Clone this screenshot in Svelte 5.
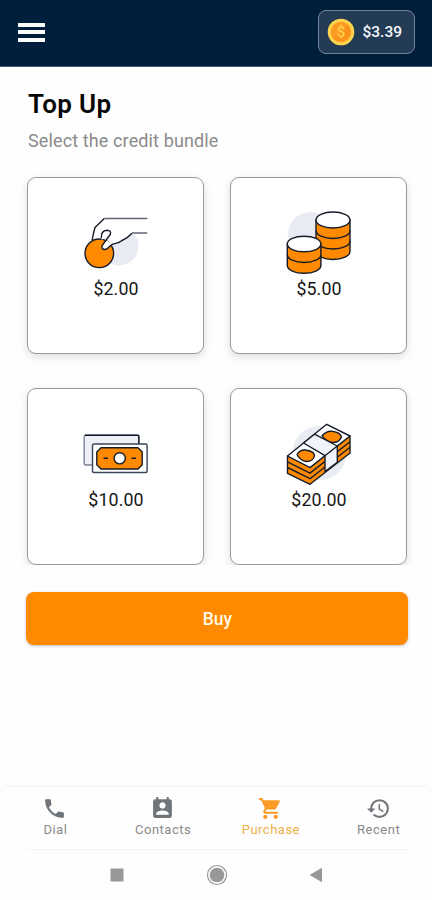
<script>
  const bundles = ['$2.00', '$5.00', '$10.00', '$20.00'];
  let selected = $state(null);
  const tabs = [
    { name: 'Dial', d: 'M6.62 10.79c1.44 2.83 3.76 5.14 6.59 6.59l2.2-2.2c.27-.27.67-.36 1.02-.24 1.12.37 2.33.57 3.57.57.55 0 1 .45 1 1V20c0 .55-.45 1-1 1-9.39 0-17-7.61-17-17 0-.55.45-1 1-1h3.5c.55 0 1 .45 1 1 0 1.25.2 2.45.57 3.57.11.35.03.74-.25 1.02l-2.2 2.2z' },
    { name: 'Contacts', d: 'M19 3h-1V1h-2v2H8V1H6v2H5c-1.11 0-2 .9-2 2v14c0 1.1.89 2 2 2h14c1.1 0 2-.9 2-2V5c0-1.1-.9-2-2-2zm-7 3c1.66 0 3 1.34 3 3s-1.34 3-3 3-3-1.34-3-3 1.34-3 3-3zm6 12H6v-1c0-2 4-3.1 6-3.1s6 1.1 6 3.1v1z' },
    { name: 'Purchase', active: true, d: 'M7 18c-1.1 0-1.99.9-1.99 2S5.9 22 7 22s2-.9 2-2-.9-2-2-2zM1 2v2h2l3.6 7.59-1.35 2.45c-.16.28-.25.61-.25.96 0 1.1.9 2 2 2h12v-2H7.42c-.14 0-.25-.11-.25-.25l.03-.12.9-1.63h7.45c.75 0 1.41-.41 1.75-1.03l3.58-6.49A1 1 0 0 0 20 4H5.21l-.94-2H1zm16 16c-1.1 0-1.99.9-1.99 2s.89 2 1.99 2 2-.9 2-2-.9-2-2-2z' },
    { name: 'Recent', d: 'M13 3a9 9 0 0 0-9 9H1l3.89 3.89.07.14L9 12H6c0-3.87 3.13-7 7-7s7 3.13 7 7-3.13 7-7 7c-1.93 0-3.68-.79-4.94-2.06l-1.42 1.42A8.954 8.954 0 0 0 13 21a9 9 0 0 0 0-18zm-1 5v5l4.28 2.54.72-1.21-3.5-2.08V8H12z' }
  ];
</script>

<div class="screen">
  <header>
    <button class="menu" aria-label="Menu"><span></span><span></span><span></span></button>
    <div class="balance">
      <svg width="28" height="28" viewBox="0 0 28 28">
        <circle cx="14" cy="14" r="13.3" fill="#ffd44d" />
        <circle cx="14" cy="14" r="10.3" fill="#fd9b22" />
        <path d="M21 6.5a10.3 10.3 0 0 1-14.5 14.5z" fill="#fb8c14" opacity=".6" />
        <text x="14" y="19.3" text-anchor="middle">$</text>
      </svg>
      <span>$3.39</span>
    </div>
  </header>

  <main>
    <h1>Top Up</h1>
    <p>Select the credit bundle</p>
    <div class="grid">
      {#each bundles as price, i}
        <button class="card" onclick={() => (selected = i)} aria-pressed={selected === i}>
          <svg width="71" height="72" viewBox="0 0 71 72" fill="none" stroke="#161c28" stroke-width="1.4" stroke-linejoin="round">
            {#if i === 0}
              <circle cx="39" cy="41" r="19.5" fill="#e8ebf2" stroke="none" />
              <path d="M67.3 13.3H24.3L15 23.3L11.7 35L22 42L25 44.3L32 39Q38 38.5 42 35.5Q49 32 52 28.8L67.3 28Z" fill="#fff" stroke="none" />
              <path d="M53 28.5H67V33H58Z" fill="#fff" stroke="none" />
              <circle cx="19.3" cy="48.3" r="14.3" fill="#ff8a00" />
              <path d="M21.5 34.5L22.3 28.5Q23.5 25.2 27 25Q31.5 25.2 30.6 29L24 38Q20.7 42.4 23 44Q26 45.3 28.5 42.7L32 39L24 34Z" fill="#fff" stroke="none" />
              <path d="M24.3 13.5L15 22.5Q13.4 28 12.2 35M21.3 33Q21 25.5 26.8 25.2Q32 25.5 30.2 29.5L24 38Q20.5 42.3 22.8 44Q26 45.4 28.5 42.5Q31.5 38.8 35 38.6Q39.5 37.8 42 35.5Q48.5 32.5 52 28.3" />
              <path d="M24.3 13.5H67.3M52 28H67.3" stroke="#5f6673" />
            {:else if i === 1}
              <circle cx="27.5" cy="29.5" r="22.5" fill="#e8ebf2" stroke="none" />
              <path d="M33 15v31.5a17 8 0 0 0 34 0V15z" fill="#ff8a00" />
              <path d="M33 25.5a17 8 0 0 0 34 0M33 36a17 8 0 0 0 34 0" />
              <ellipse cx="50" cy="15" rx="17" ry="8" fill="#fff" />
              <path d="M4.3 39v21.5a16.8 7.8 0 0 0 33.6 0V39z" fill="#ff8a00" />
              <path d="M4.3 49.7a16.8 7.8 0 0 0 33.6 0" />
              <ellipse cx="21.1" cy="39" rx="16.8" ry="7.8" fill="#fff" />
            {:else if i === 2}
              <rect x="4.2" y="19.2" width="54.6" height="29.8" rx="1.5" fill="#edf0f7" stroke="#788294" />
              <path d="M5 19.2h53q.8 0 .8.8v8" />
              <rect x="12.5" y="28" width="54.6" height="28.5" rx="1.5" fill="#fff" stroke="#39445a" />
              <path d="M21 31.8h37l4.2 4.2v12.8L58 53H21l-4.2-4.2V36z" fill="#ff8a00" />
              <circle cx="39.7" cy="42.3" r="5.6" fill="#fff" />
              <path d="M23.5 42.3h4.5M51.5 42.3h4.5" />
            {:else}
              <circle cx="36.5" cy="37" r="27" fill="#e8ebf2" stroke="none" />
              <path d="M4.5 40L27 51.5L67 20V37L27 68.3L4.5 57.3z" fill="#ff8a00" />
              <path d="M4.5 45.8L27 57.1L67 25.7M4.5 51.5L27 62.7L67 31.3" />
              <path d="M4.5 40L43.7 8.3L67 20L27 51.5z" fill="#fff" />
              <path d="M14 38.5Q17 33.5 22 34Q31 35 31.5 39.5Q30.5 45.5 23.5 45.5Q17.5 45 14 38.5zM39 19.8Q43 15.2 48.5 15.3Q56.5 16 58.5 20.5Q57 26 50.5 26.5Q43.5 25.8 39 19.8z" fill="#ff8a00" />
              <path d="M20.5 27L31.5 18.2L54.3 30V46.3L42 55.5V39.7z" fill="#f1f3fa" />
              <path d="M42 39.7L54.3 30" />
            {/if}
          </svg>
          <span class="price">{price}</span>
        </button>
      {/each}
    </div>
    <button class="buy">Buy</button>
  </main>

  <nav>
    {#each tabs as tab}
      <a href="#{tab.name}" class:active={tab.active}>
        <svg width="25" height="25" viewBox="0 0 24 24"><path d={tab.d} /></svg>
        <span>{tab.name}</span>
      </a>
    {/each}
  </nav>
  <div class="system">
    <svg width="14" height="14" viewBox="0 0 14 14"><rect width="13" height="13" x=".5" y=".5" /></svg>
    <svg width="22" height="22" viewBox="0 0 22 22"><circle cx="11" cy="11" r="9.5" fill="none" stroke="#989898" stroke-width="1.2" /><circle cx="11" cy="11" r="7.3" /></svg>
    <svg width="14" height="16" viewBox="0 0 14 16"><path d="M.5 8L13 .8v14.4z" /></svg>
  </div>
</div>

<style>
  :global(body) { margin: 0; background: #fefefe; }
  .screen {
    width: 432px;
    height: 900px;
    overflow: hidden;
    display: flex;
    flex-direction: column;
    font-family: Roboto, "Liberation Sans", sans-serif;
    background: #fefefe;
  }
  button { font-family: inherit; cursor: pointer; }
  header {
    height: 67px;
    flex: none;
    box-sizing: border-box;
    padding: 0 17px 2px 18px;
    display: flex;
    align-items: center;
    justify-content: space-between;
    background: #001f3d;
    border-bottom: 1px solid #4a5670;
  }
  .menu {
    display: flex;
    flex-direction: column;
    gap: 3.5px;
    padding: 0;
    border: 0;
    background: none;
  }
  .menu span { width: 26.5px; height: 4px; background: #fbfdfb; }
  .balance {
    width: 97px;
    height: 44px;
    box-sizing: border-box;
    padding-left: 7.5px;
    display: flex;
    align-items: center;
    gap: 8px;
    border: 1.5px solid #74849e;
    border-radius: 8px;
    background: #243b56;
    color: #f4f8fb;
    font-size: 15.5px;
    font-weight: 500;
  }
  .balance text { font-size: 15px; font-weight: 500; fill: #ffd04c; }
  main { display: flex; flex-direction: column; padding: 0 24.5px 0 25.5px; }
  h1 {
    margin: 20px 2.5px 0;
    font-size: 26px;
    line-height: 34px;
    font-weight: 600;
    letter-spacing: 0.3px;
    color: #080808;
  }
  p { margin: 9px 2.5px 0; font-size: 18px; line-height: 22px; letter-spacing: 0.12px; color: #8b8b8b; }
  .grid {
    display: grid;
    grid-template-columns: 177px 177px;
    grid-auto-rows: 176.5px;
    gap: 34.5px 26px;
    height: 388px;
    margin: 15px -10px 0;
    padding: 10px 12px 0 11.5px;
    box-sizing: border-box;
    height: 398px;
    overflow: hidden;
  }
  .card {
    display: flex;
    flex-direction: column;
    align-items: center;
    box-sizing: border-box;
    padding: 27px 0 0;
    border: 1.5px solid #9b9b9b;
    border-radius: 9px;
    background: #fff;
    box-shadow: 0 3px 8px rgba(0, 0, 0, 0.13);
  }
  .card svg { flex: none; }
  .price { margin: 1px 0 0 1px; font-size: 17.8px; line-height: 22px; color: #161616; letter-spacing: 0.1px; }
  .buy {
    height: 53px;
    margin-top: 26.5px;
    padding: 2px 0 0 2px;
    border: 0;
    border-radius: 8px;
    background: #ff8a00;
    color: #fff8e6;
    font-size: 17.5px;
    font-weight: 500;
    box-shadow: 0 1px 3px rgba(0, 0, 0, 0.25);
  }
  nav {
    display: flex;
    height: 63px;
    flex: none;
    margin-top: auto;
    box-sizing: border-box;
    padding-left: 1px;
    border-top: 1px solid #f7f7f7;
    border-radius: 10px 10px 0 0;
    box-shadow: 0 -1px 3px rgba(0, 0, 0, 0.04);
  }
  nav a {
    flex: 1 1 0;
    display: flex;
    flex-direction: column;
    align-items: center;
    padding-top: 9px;
    color: #8a8a8a;
    text-decoration: none;
  }
  nav path { fill: #70757a; }
  nav span { margin: 1px 0 0 1px; font-size: 13px; line-height: 16px; letter-spacing: 0.5px; }
  nav .active { color: #edb04a; }
  nav .active path { fill: #f99b24; }
  .system {
    height: 51px;
    flex: none;
    margin: 0 24px 0 26px;
    padding: 0 85px 0 84px;
    display: flex;
    align-items: center;
    justify-content: space-between;
    border-top: 1px solid #f5f5f5;
    box-sizing: border-box;
  }
  .system rect, .system path, .system circle { fill: #989898; }
  .system circle[fill="none"] { fill: none; }
</style>
